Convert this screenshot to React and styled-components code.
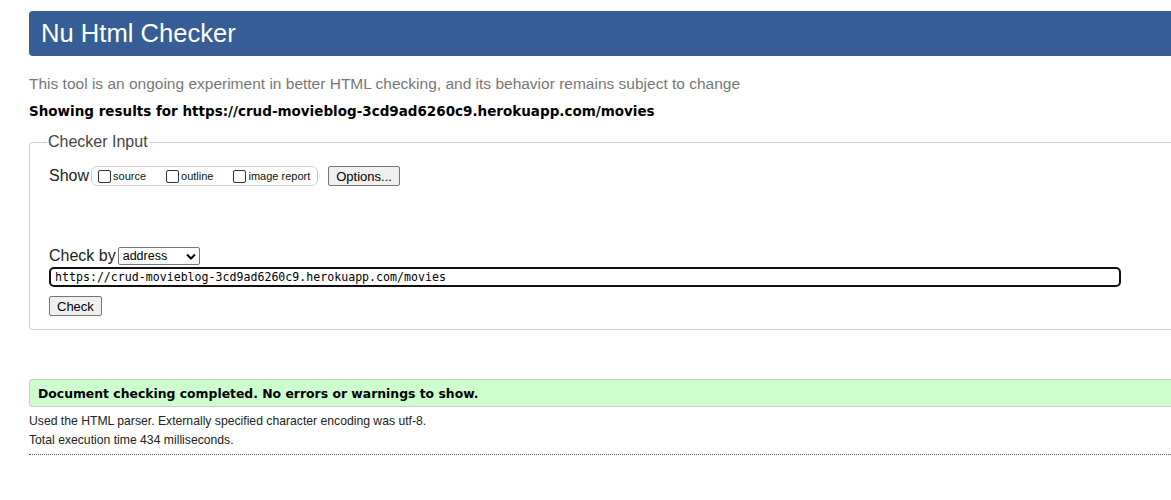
import React from 'react';
import styled, { createGlobalStyle } from 'styled-components';

const GlobalStyle = createGlobalStyle`
  html, body {
    margin: 0;
    padding: 0;
    overflow: hidden;
    background: #fff;
  }
  body {
    font-family: "Liberation Sans", Arial, sans-serif;
    color: #000;
  }
`;

const Page = styled.div`
  width: 1220px;
  padding: 11px 0 40px 29px;
`;

const Header = styled.h1`
  margin: 0;
  height: 45px;
  display: flex;
  align-items: center;
  padding-left: 12px;
  background: #365d95;
  color: #fff;
  font-weight: normal;
  font-size: 25.6px;
  border-radius: 4px 0 0 4px;
`;

const Intro = styled.p`
  margin: 19px 0 0;
  font-size: 15.5px;
  color: #777;
`;

const ResultsFor = styled.p`
  margin: 10px 0 0;
  font-family: "DejaVu Sans", Verdana, sans-serif;
  font-weight: bold;
  font-size: 13.5px;
`;

const Fieldset = styled.fieldset`
  margin: 14px 0 0;
  padding: 15px 0 13px 19px;
  border: 1px solid #ccc;
  border-right: none;
  border-radius: 4px 0 0 4px;
`;

const Legend = styled.legend`
  margin-left: -2px;
  padding: 0 1px;
  font-size: 16px;
  color: #444;
`;

const Row = styled.div`
  display: flex;
  align-items: center;
  margin-top: ${p => p.$top || 0}px;
`;

const Label = styled.span`
  font-size: 16px;
  color: #222;
  margin-right: 2px;
`;

const Options = styled.div`
  display: flex;
  align-items: center;
  height: 18px;
  padding: 0 7px 0 6px;
  border: 1px solid #ccc;
  border-radius: 6px;
  gap: 20px;
`;

const Check = styled.label`
  display: flex;
  align-items: center;
  white-space: nowrap;
  font-size: 11px;
  color: #111;
`;

const Box = styled.span`
  width: 11px;
  height: 11px;
  margin-right: 2px;
  border: 1px solid #333;
  border-radius: 2px;
  background: #fff;
`;

const Button = styled.button`
  font-family: "Liberation Sans", Arial, sans-serif;
  font-size: 13px;
  height: 20px;
  padding: 0 ${p => p.$pad || 7}px;
  background: #efefef;
  color: #000;
  border: 1px solid #767676;
  border-radius: 2px;
  margin-left: ${p => p.$left || 0}px;
`;

const Select = styled.span`
  display: flex;
  align-items: center;
  justify-content: space-between;
  width: 73px;
  height: 16px;
  padding: 0 3px 0 4px;
  border: 1px solid #767676;
  border-radius: 2px;
  font-size: 12.5px;
  color: #000;
`;

const UrlInput = styled.div`
  width: 1060px;
  height: 16px;
  display: flex;
  align-items: center;
  padding: 0 4px;
  border: 2px solid #111;
  border-radius: 5px;
  font-family: "DejaVu Sans Mono", "Liberation Mono", monospace;
  font-size: 11.6px;
  color: #000;
`;

const Success = styled.div`
  margin-top: 49px;
  height: 26px;
  display: flex;
  align-items: center;
  padding-left: 8px;
  background: #ccffcc;
  border: 1px solid #ccc;
  border-right: none;
  border-radius: 4px 0 0 4px;
  font-family: "DejaVu Sans", Verdana, sans-serif;
  font-weight: bold;
  font-size: 12.4px;
  color: #000;
`;

const Note = styled.p`
  margin: ${p => p.$top || 0}px 0 0;
  font-size: 12.2px;
  line-height: 19px;
  color: #222;
`;

const Rule = styled.hr`
  margin: 4px 0 0;
  border: none;
  border-top: 1px dotted #666;
`;

function Chevron() {
  return (
    <svg width="10" height="7" viewBox="0 0 10 7">
      <path d="M1 1.5 L5 5.5 L9 1.5" fill="none" stroke="#000" strokeWidth="2" />
    </svg>
  );
}

export default function App() {
  const shows = ['source', 'outline', 'image report'];
  const url = 'https://crud-movieblog-3cd9ad6260c9.herokuapp.com/movies';

  return (
    <Page>
      <GlobalStyle />
      <Header>Nu Html Checker</Header>
      <Intro>This tool is an ongoing experiment in better HTML checking, and its behavior remains subject to change</Intro>
      <ResultsFor>Showing results for {url}</ResultsFor>

      <Fieldset>
        <Legend>Checker Input</Legend>
        <Row>
          <Label>Show</Label>
          <Options>
            {shows.map(s => (
              <Check key={s}>
                <Box />
                {s}
              </Check>
            ))}
          </Options>
          <Button $left={10}>Options...</Button>
        </Row>
        <Row $top={61}>
          <Label>Check by</Label>
          <Select>address <Chevron /></Select>
        </Row>
        <Row $top={2}>
          <UrlInput>{url}</UrlInput>
        </Row>
        <Row $top={9}>
          <Button>Check</Button>
        </Row>
      </Fieldset>

      <Success>Document checking completed. No errors or warnings to show.</Success>
      <Note $top={5}>Used the HTML parser. Externally specified character encoding was utf-8.</Note>
      <Note>Total execution time 434 milliseconds.</Note>
      <Rule />
    </Page>
  );
}
